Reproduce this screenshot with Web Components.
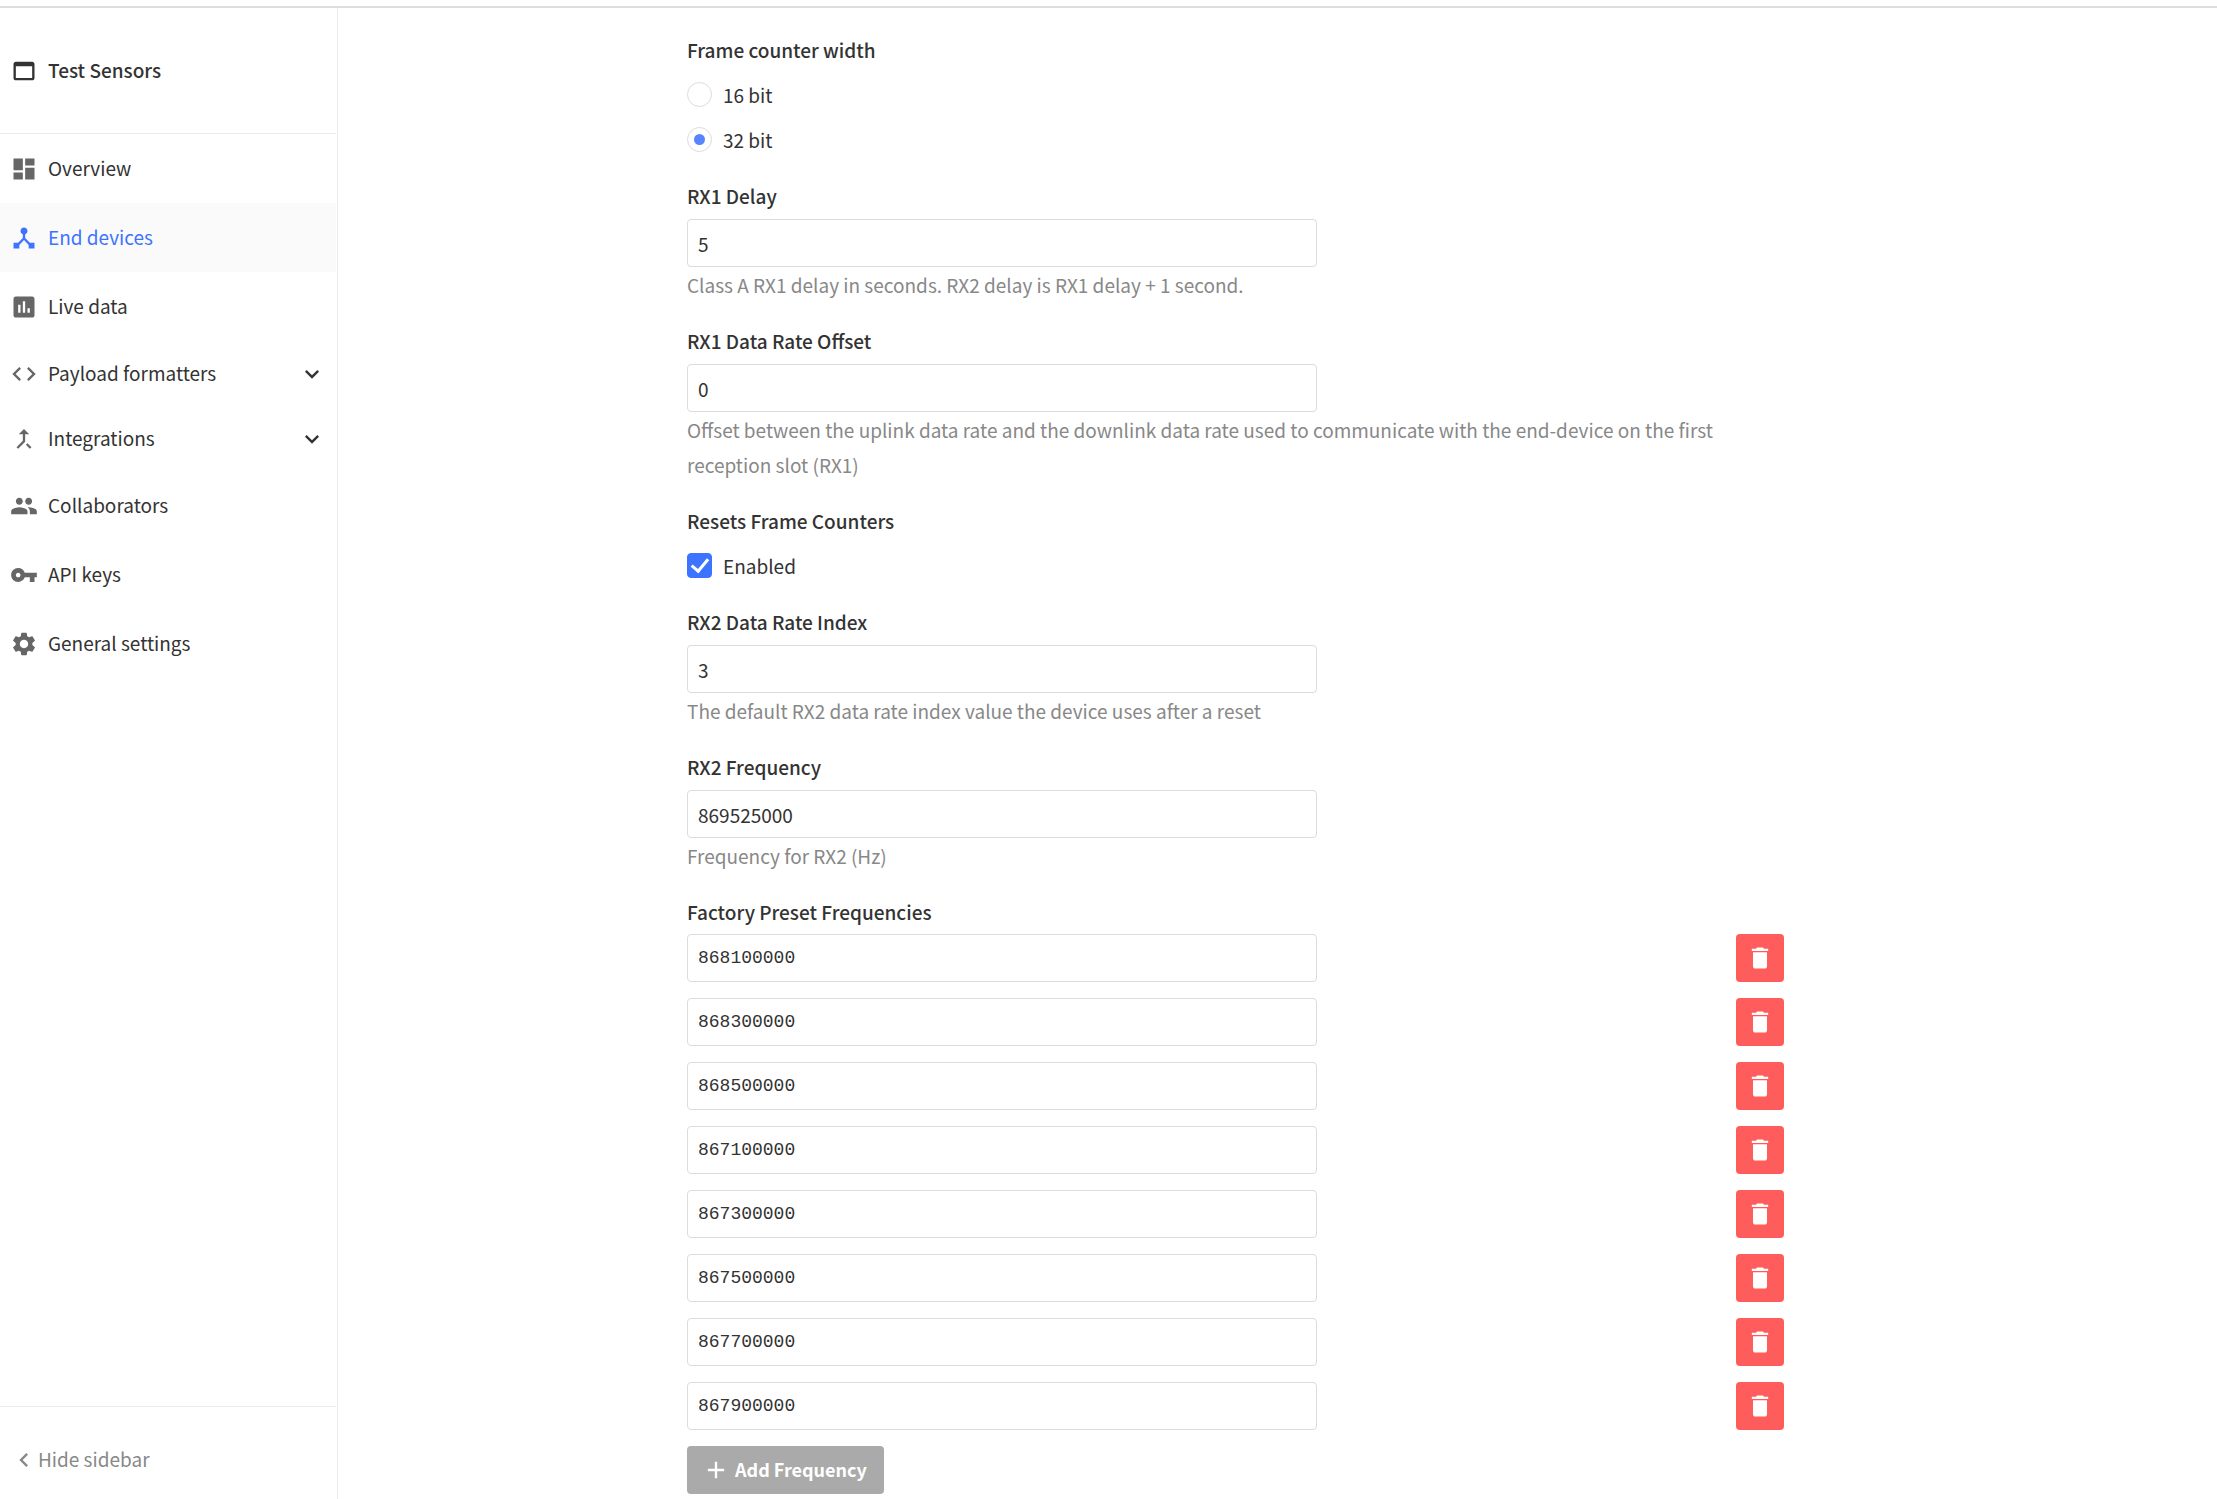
<!DOCTYPE html>
<html lang="en">
<head>
<meta charset="utf-8">
<meta name="viewport" content="width=device-width, initial-scale=1">
<title>Test Sensors</title>
<style>
  html{
    --ink: #333;
    --muted: #888;
    --icon: #666;
    --blue: #3d74ff;
    --red: #ff5c5c;
    --line: #ebebeb;
    --border: #dcdcdc;
  }
  body{
    margin: 0;
    background: #fff;
    color: var(--ink);
    font: 400 19px/35px "Noto Sans CJK SC", "Noto Sans", sans-serif;
  }
</style>
</head>
<body>

<app-shell>
  <side-bar slot="side" heading="Test Sensors">
    <nav-item icon="dashboard" href="#overview">Overview</nav-item>
    <nav-item icon="devices" href="#devices" active>End devices</nav-item>
    <nav-item icon="poll" href="#data">Live data</nav-item>
    <nav-item icon="code" expandable>Payload formatters</nav-item>
    <nav-item icon="merge" expandable>Integrations</nav-item>
    <nav-item icon="people" href="#collaborators">Collaborators</nav-item>
    <nav-item icon="key" href="#api-keys">API keys</nav-item>
    <nav-item icon="settings" href="#settings">General settings</nav-item>
  </side-bar>

  <choice-field type="radio" label="Frame counter width" options="16 bit,32 bit" checked="32 bit"></choice-field>
  <text-field label="RX1 Delay" value="5">Class A RX1 delay in seconds. RX2 delay is RX1 delay + 1 second.</text-field>
  <text-field label="RX1 Data Rate Offset" value="0">Offset between the uplink data rate and the downlink data rate used to communicate with the end-device on the first reception slot (RX1)</text-field>
  <choice-field type="checkbox" label="Resets Frame Counters" options="Enabled" checked="Enabled"></choice-field>
  <text-field label="RX2 Data Rate Index" value="3">The default RX2 data rate index value the device uses after a reset</text-field>
  <text-field label="RX2 Frequency" value="869525000">Frequency for RX2 (Hz)</text-field>
  <frequency-list label="Factory Preset Frequencies"
    values="868100000,868300000,868500000,867100000,867300000,867500000,867700000,867900000"></frequency-list>
</app-shell>

<script>
(() => {
  // 24x24 icon shapes
  const ICONS = {
    window:    'M19 4H5c-1.11 0-2 .9-2 2v12c0 1.1.89 2 2 2h14c1.1 0 2-.9 2-2V6c0-1.1-.9-2-2-2zm0 14H5V8h14v10z',
    dashboard: 'M3 13h8V3H3v10zm0 8h8v-6H3v6zm10 0h8V11h-8v10zm0-18v6h8V3h-8z',
    devices:   'M17 16l-4-4V8.82C14.16 8.4 15 7.3 15 6c0-1.66-1.34-3-3-3S9 4.34 9 6c0 1.3.84 2.4 2 2.82V12l-4 4H3v5h5v-3.05l4-4.2 4 4.2V21h5v-5h-4z',
    poll:      'M19 3H5c-1.1 0-2 .9-2 2v14c0 1.1.9 2 2 2h14c1.1 0 2-.9 2-2V5c0-1.1-.9-2-2-2zM9 17H7v-7h2v7zm4 0h-2V7h2v10zm4 0h-2v-4h2v4z',
    code:      'M9.4 16.6L4.8 12l4.6-4.6L8 6l-6 6 6 6 1.4-1.4zm5.2 0l4.6-4.6-4.6-4.6L16 6l6 6-6 6-1.4-1.4z',
    merge:     'M17 20.41L18.41 19 15 15.59 13.59 17 17 20.41zM7.5 8H11v5.59L5.59 19 7 20.41l6-6V8h3.5L12 3.5 7.5 8z',
    people:    'M16 11c1.66 0 2.99-1.34 2.99-3S17.66 5 16 5c-1.66 0-3 1.34-3 3s1.34 3 3 3zm-8 0c1.66 0 2.99-1.34 2.99-3S9.66 5 8 5C6.34 5 5 6.34 5 8s1.34 3 3 3zm0 2c-2.33 0-7 1.17-7 3.5V19h14v-2.5c0-2.33-4.67-3.5-7-3.5zm8 0c-.29 0-.62.02-.97.05 1.16.84 1.97 1.97 1.97 3.45V19h6v-2.5c0-2.33-4.67-3.5-7-3.5z',
    key:       'M12.65 10C11.83 7.67 9.61 6 7 6c-3.31 0-6 2.69-6 6s2.69 6 6 6c2.61 0 4.83-1.67 5.65-4H17v4h4v-4h2v-4H12.65zM7 14c-1.1 0-2-.9-2-2s.9-2 2-2 2 .9 2 2-.9 2-2 2z',
    settings:  'M19.14 12.94c.04-.3.06-.61.06-.94 0-.32-.02-.64-.07-.94l2.03-1.58c.18-.14.23-.41.12-.61l-1.92-3.32c-.12-.22-.37-.29-.59-.22l-2.39.96c-.5-.38-1.03-.7-1.62-.94l-.36-2.54c-.04-.24-.24-.41-.48-.41h-3.84c-.24 0-.43.17-.47.41l-.36 2.54c-.59.24-1.13.57-1.62.94l-2.39-.96c-.22-.08-.47 0-.59.22L2.74 8.87c-.12.21-.08.47.12.61l2.03 1.58c-.05.3-.09.63-.09.94s.02.64.07.94l-2.03 1.58c-.18.14-.23.41-.12.61l1.92 3.32c.12.22.37.29.59.22l2.39-.96c.5.38 1.03.7 1.62.94l.36 2.54c.05.24.24.41.48.41h3.84c.24 0 .44-.17.47-.41l.36-2.54c.59-.24 1.13-.56 1.62-.94l2.39.96c.22.08.47 0 .59-.22l1.92-3.32c.12-.22.07-.47-.12-.61l-2.01-1.58zM12 15.6c-1.98 0-3.6-1.62-3.6-3.6s1.62-3.6 3.6-3.6 3.6 1.62 3.6 3.6-1.62 3.6-3.6 3.6z',
    down:      'M7.41 8.59L12 13.17l4.59-4.58L18 10l-6 6-6-6 1.41-1.41z',
    left:      'M15.41 7.41L14 6l-6 6 6 6 1.41-1.41L10.83 12z',
    add:       'M19 13h-6v6h-2v-6H5v-2h6V5h2v6h6v2z',
    trash:     'M6 19c0 1.1.9 2 2 2h8c1.1 0 2-.9 2-2V7H6v12zM19 4h-3.5l-1-1h-5l-1 1H5v2h14V4z'
  };

  const icon = name => `<svg viewBox="0 0 24 24" aria-hidden="true"><path d="${ICONS[name]}"/></svg>`;

  // shared between the form elements
  const FIELD_CSS = `
    :host{ display: block }
    *{ box-sizing: border-box }
    svg{ width: 28px; height: 28px; fill: currentColor; flex: none }
    .label{
      display: block;
      padding: 0;
      margin-bottom: 5px;
      font-weight: 500;
    }
    .text{
      display: block;
      width: 100%;
      max-width: 630px;
      height: 48px;
      margin: 0;
      padding: 0 10px;
      border: 1px solid var(--border);
      border-radius: 4px;
      background: #fff;
      color: var(--ink);
      font: inherit;
      outline: none;
    }
    .text:focus{ border-color: var(--blue) }
  `;

  class AppShell extends HTMLElement {
    constructor(){
      super();
      this.attachShadow({mode:'open'}).innerHTML = `
        <style>
          :host{
            display: flex;
            flex-direction: column;
            box-sizing: border-box;
            min-height: 100vh;
          }
          header{ height: 6px; border-bottom: 2px solid #dcdde1 }
          .body{ flex: 1; display: flex }
          main{ flex: 1; min-width: 0 }
          form{
            box-sizing: border-box;
            max-width: 1181px;
            margin: 0 auto;
            padding: 24px 84px 0 0;
          }
        </style>
        <header></header>
        <div class="body">
          <slot name="side"></slot>
          <main><form><slot></slot></form></main>
        </div>
      `;
    }
  }

  class SideBar extends HTMLElement {
    connectedCallback(){
      this.attachShadow({mode:'open'}).innerHTML = `
        <style>
          :host{
            display: flex;
            flex-direction: column;
            flex: none;
            box-sizing: border-box;
            width: 338px;
            padding-right: 1px;
            border-right: 1px solid var(--line);
          }
          svg{ width: 28px; height: 28px; fill: currentColor; flex: none }
          span{ padding-bottom: 2px }
          .head{
            display: flex;
            align-items: center;
            gap: 10px;
            height: 125px;
            padding-left: 10px;
            border-bottom: 1px solid var(--line);
            font-weight: 500;
          }
          nav{ flex: 1 }
          .hide{
            display: flex;
            align-items: center;
            padding: 34px 10px 21px;
            border: 0;
            border-top: 1px solid var(--line);
            background: none;
            color: var(--muted);
            font: inherit;
            cursor: pointer;
          }
        </style>
        <div class="head">${icon('window')}<span>${this.getAttribute('heading')}</span></div>
        <nav><slot></slot></nav>
        <button class="hide" type="button">${icon('left')}<span>Hide sidebar</span></button>
      `;
    }
  }

  class NavItem extends HTMLElement {
    connectedCallback(){
      const expandable = this.hasAttribute('expandable');
      const inner = `${icon(this.getAttribute('icon'))}<span><slot></slot></span>`;
      this.attachShadow({mode:'open'}).innerHTML = `
        <style>
          :host{ display: block }
          a, button{
            display: flex;
            align-items: center;
            gap: 10px;
            box-sizing: border-box;
            width: 100%;
            height: 69px;
            padding: 0 10px;
            border: 0;
            background: none;
            color: var(--ink);
            font: inherit;
            text-align: left;
            text-decoration: none;
            cursor: pointer;
          }
          button{ height: 65px }
          span{ flex: 1; padding-bottom: 2px }
          svg{ width: 28px; height: 28px; fill: var(--icon); flex: none }
          span + svg{ fill: var(--ink) }
          :host([active]) a{ background: #fafafa; color: var(--blue) }
          :host([active]) svg{ fill: var(--blue) }
        </style>
        ${expandable
          ? `<button type="button" aria-expanded="false">${inner}${icon('down')}</button>`
          : `<a href="${this.getAttribute('href')}">${inner}</a>`}
      `;
    }
  }

  class TextField extends HTMLElement {
    connectedCallback(){
      this.attachShadow({mode:'open'}).innerHTML = `
        <style>
          ${FIELD_CSS}
          :host{ margin-bottom: 21px }
          .label{ margin-bottom: 6px }
          .hint{ color: var(--muted) }
        </style>
        <label class="label" for="input">${this.getAttribute('label')}</label>
        <input class="text" id="input" type="text" value="${this.getAttribute('value')}" aria-describedby="hint">
        <div class="hint" id="hint"><slot></slot></div>
      `;
    }
  }

  class ChoiceField extends HTMLElement {
    connectedCallback(){
      const type = this.getAttribute('type');
      const checked = this.getAttribute('checked');
      const rows = this.getAttribute('options').split(',').map(o => `
        <label class="row"><input type="${type}" name="choice" ${o === checked ? 'checked' : ''}><span>${o}</span></label>
      `).join('');
      this.attachShadow({mode:'open'}).innerHTML = `
        <style>
          ${FIELD_CSS}
          :host{ margin-bottom: 16px }
          fieldset{ margin: 0; padding: 0; border: 0; min-width: 0 }
          .row{
            display: flex;
            align-items: center;
            gap: 11px;
            height: 45px;
          }
          input{
            appearance: none;
            display: grid;
            place-items: center;
            width: 25px;
            height: 25px;
            margin: 0;
            border: 1px solid var(--border);
            border-radius: 4px;
            background: #fff;
          }
          input[type=radio]{ border-radius: 50% }
          input[type=radio]:checked::before{
            content: "";
            width: 11px;
            height: 11px;
            border-radius: 50%;
            background: #5685ff;
          }
          input[type=checkbox]:checked{ background: var(--blue); border-color: var(--blue) }
          input[type=checkbox]:checked::before{
            content: "";
            width: 7px;
            height: 14px;
            margin-bottom: 4px;
            border: solid #fff;
            border-width: 0 3px 3px 0;
            transform: rotate(40deg);
          }
        </style>
        <fieldset>
          <legend class="label">${this.getAttribute('label')}</legend>
          ${rows}
        </fieldset>
      `;
    }
  }

  class FrequencyList extends HTMLElement {
    connectedCallback(){
      this.attachShadow({mode:'open'}).innerHTML = `
        <style>
          ${FIELD_CSS}
          fieldset{ margin: 0; padding: 0; border: 0; min-width: 0 }
          .row{
            display: flex;
            justify-content: space-between;
            gap: 16px;
            margin-bottom: 16px;
          }
          .text{ font-family: "Liberation Mono", monospace; font-size: 18px }
          button{
            display: flex;
            align-items: center;
            justify-content: center;
            height: 48px;
            border: 0;
            border-radius: 4px;
            color: #fff;
            font: inherit;
            font-size: 18px;
            font-weight: 700;
            cursor: pointer;
          }
          .remove{ flex: none; width: 48px; padding: 0; background: var(--red) }
          .add{ gap: 5px; padding: 0 17px 0 15px; background: #aaa }
          .add span{ padding-bottom: 2px }
        </style>
        <fieldset>
          <legend class="label">${this.getAttribute('label')}</legend>
          <div class="rows"></div>
          <button class="add" type="button">${icon('add')}<span>Add Frequency</span></button>
        </fieldset>
      `;
      this._rows = this.shadowRoot.querySelector('.rows');
      this.getAttribute('values').split(',').forEach(v => this._addRow(v));
      this.shadowRoot.querySelector('.add').addEventListener('click', () => this._addRow(''));
    }

    _addRow(value){
      const row = document.createElement('div');
      row.className = 'row';
      row.innerHTML = `
        <input class="text" type="text" aria-label="Frequency (Hz)" value="${value}">
        <button class="remove" type="button" aria-label="Remove frequency">${icon('trash')}</button>
      `;
      row.querySelector('.remove').addEventListener('click', () => row.remove());
      this._rows.appendChild(row);
    }
  }

  customElements.define('app-shell', AppShell);
  customElements.define('side-bar', SideBar);
  customElements.define('nav-item', NavItem);
  customElements.define('text-field', TextField);
  customElements.define('choice-field', ChoiceField);
  customElements.define('frequency-list', FrequencyList);
})();
</script>
</body>
</html>
